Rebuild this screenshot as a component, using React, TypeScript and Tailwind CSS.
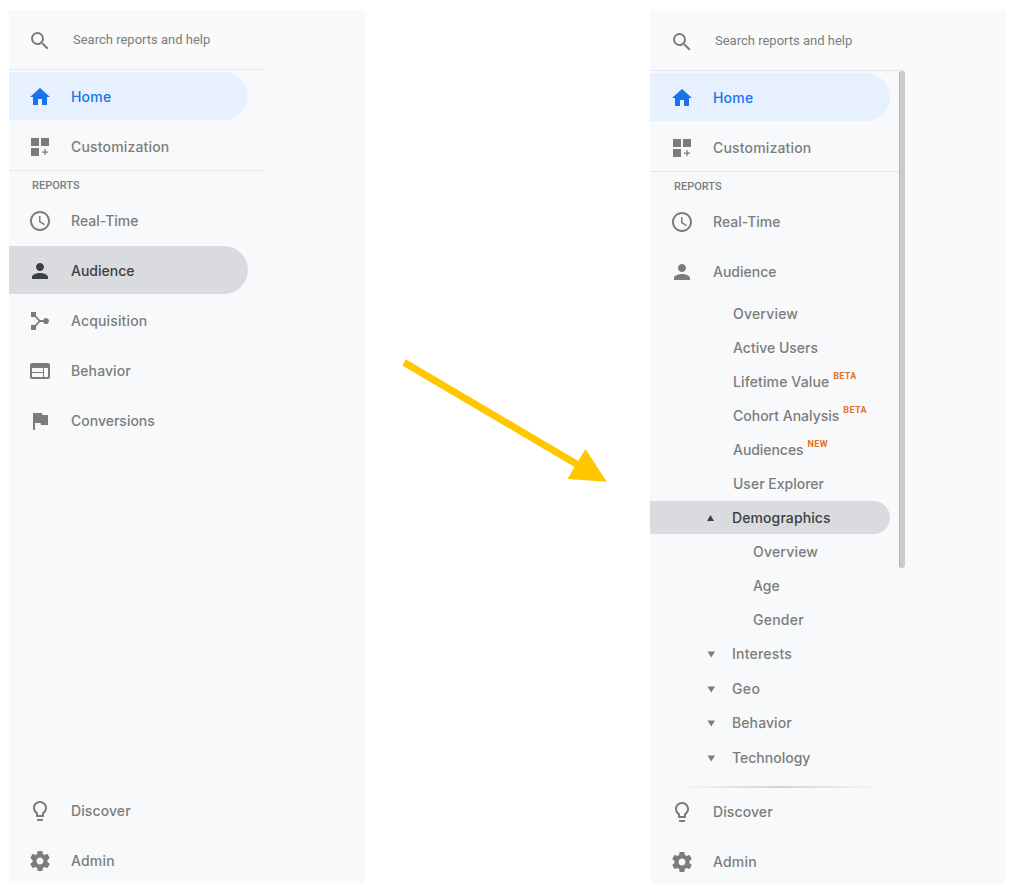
import type { ReactNode } from "react";

const paths = {
  search:
    "M15.5 14h-.79l-.28-.27A6.471 6.471 0 0 0 16 9.5 6.5 6.5 0 1 0 9.5 16c1.61 0 3.09-.59 4.23-1.57l.27.28v.79l5 4.99L20.49 19l-4.99-5zm-6 0C7.01 14 5 11.99 5 9.5S7.01 5 9.5 5 14 7.01 14 9.5 11.99 14 9.5 14z",
  home: "M10 20v-6h4v6h5v-8h3L12 3 2 12h3v8z",
  customization: "M3 3h8v8H3zM13 3h8v8h-8zM3 13h8v8H3zM16.4 14h1.3v2.4H20v1.3h-2.3V20h-1.3v-2.3H14v-1.3h2.4z",
  clock:
    "M11.99 2C6.47 2 2 6.48 2 12s4.47 10 9.99 10C17.52 22 22 17.52 22 12S17.52 2 11.99 2zM12 20c-4.42 0-8-3.58-8-8s3.58-8 8-8 8 3.58 8 8-3.58 8-8 8zm.5-13H11v6l5.25 3.15.75-1.23-4.5-2.67z",
  person:
    "M12 12c2.21 0 4-1.79 4-4s-1.79-4-4-4-4 1.79-4 4 1.79 4 4 4zm0 2c-2.67 0-8 1.34-8 4v2h16v-2c0-2.66-5.33-4-8-4z",
  acquisition:
    "M3 3h5v3.7l4 4.4h3.2a3 3 0 1 1 0 1.9H12l-4 4.4V21H3v-5h4l3.6-4L7 8H3z",
  web: "M20 4H4c-1.1 0-1.99.9-1.99 2L2 18c0 1.1.9 2 2 2h16c1.1 0 2-.9 2-2V6c0-1.1-.9-2-2-2zm-5 14H4v-4h11v4zm0-5H4V9h11v4zm5 5h-4V9h4v9z",
  flag: "M14.4 6L14 4H5v17h2v-7h5.6l.4 2h7V6z",
  bulb: "M9 21c0 .55.45 1 1 1h4c.55 0 1-.45 1-1v-1H9v1zm3-19C8.14 2 5 5.14 5 9c0 2.38 1.19 4.47 3 5.74V17c0 .55.45 1 1 1h6c.55 0 1-.45 1-1v-2.26c1.81-1.27 3-3.36 3-5.74 0-3.86-3.14-7-7-7zm2.85 11.1l-.85.6V16h-4v-2.3l-.85-.6A4.997 4.997 0 0 1 7 9c0-2.76 2.24-5 5-5s5 2.24 5 5c0 1.63-.8 3.16-2.15 4.1z",
  gear: "M19.43 12.98c.04-.32.07-.64.07-.98s-.03-.66-.07-.98l2.11-1.65c.19-.15.24-.42.12-.64l-2-3.46c-.12-.22-.39-.3-.61-.22l-2.49 1c-.52-.4-1.08-.73-1.69-.98l-.38-2.65C14.46 2.18 14.25 2 14 2h-4c-.25 0-.46.18-.49.42l-.38 2.65c-.61.25-1.17.59-1.69.98l-2.49-1c-.23-.09-.49 0-.61.22l-2 3.46c-.13.22-.07.49.12.64l2.11 1.65c-.04.32-.07.65-.07.98s.03.66.07.98l-2.11 1.65c-.19.15-.24.42-.12.64l2 3.46c.12.22.39.3.61.22l2.49-1c.52.4 1.08.73 1.69.98l.38 2.65c.03.24.24.42.49.42h4c.25 0 .46-.18.49-.42l.38-2.65c.61-.25 1.17-.59 1.69-.98l2.49 1c.23.09.49 0 .61-.22l2-3.46c.12-.22.07-.49-.12-.64l-2.11-1.65zM12 15.5c-1.93 0-3.5-1.57-3.5-3.5s1.57-3.5 3.5-3.5 3.5 1.57 3.5 3.5-1.57 3.5-3.5 3.5z",
};

function Icon({ name }: { name: keyof typeof paths }) {
  return (
    <svg className="size-6 shrink-0" viewBox="0 0 24 24" fill="currentColor">
      <path d={paths[name]} />
    </svg>
  );
}

type RowProps = { icon: keyof typeof paths; label: string; tracking: string; tone?: string };

function Row({ icon, label, tracking, tone = "text-[#7b7d7c]" }: RowProps) {
  return (
    <div className={`flex h-12 w-[240px] shrink-0 items-center gap-[19px] rounded-r-full pt-0.5 pl-5 ${tone}`}>
      <Icon name={icon} />
      <span className={`pb-0.5 text-[14px] font-medium whitespace-nowrap ${tracking}`}>{label}</span>
    </div>
  );
}

function Panel({ right = false, children }: { right?: boolean; children: ReactNode }) {
  return (
    <aside className={`h-[873px] w-[356px] shrink-0 overflow-hidden bg-[#f8f9fb] ${right ? "mt-[11px]" : "mt-[10px]"}`}>
      <div className={`flex h-full flex-col ${right ? "w-[255px]" : "-ml-px w-[256px]"}`}>
        <div className="mt-2.5 ml-[15px] flex h-10 w-[225px] shrink-0 items-center bg-[#fafafa] pt-0.5 pl-[5px] text-[#7b7d7c]">
          <Icon name="search" />
          <span className="ml-[21px] pb-0.5 font-[Roboto,sans-serif] text-[13px] whitespace-nowrap">
            Search reports and help
          </span>
        </div>
        {children}
      </div>
    </aside>
  );
}

function TopRows() {
  return (
    <>
      <Row icon="home" label="Home" tracking="tracking-[0.2px]" tone="bg-[#e6f0fe] text-[#1a73e8]" />
      <div className="h-0.5 shrink-0" />
      <Row icon="customization" label="Customization" tracking="tracking-[0.17px]" />
      <div className="h-px shrink-0 bg-[#e5e7e8]" />
      <div className="flex h-[25px] shrink-0 items-center pt-[6px] pl-6 font-[Roboto,sans-serif] text-[11px] font-medium text-[#7b7d7c]">
        REPORTS
      </div>
    </>
  );
}

function Sub({ label, tracking, badge, nested = false }: { label: string; tracking: string; badge?: string; nested?: boolean }) {
  return (
    <div className={`flex h-[34px] items-center pb-0.5 text-[14px] font-medium whitespace-nowrap text-[#7b7d7c] ${nested ? "pl-[103px]" : "pl-[83px]"}`}>
      <span className={tracking}>{label}</span>
      {badge && (
        <span className="mb-[9px] ml-[4px] font-[Roboto,sans-serif] text-[9px] font-bold tracking-[0.35px] text-[#e0702c]">{badge}</span>
      )}
    </div>
  );
}

function Group({ label, tracking, open = false }: { label: string; tracking: string; open?: boolean }) {
  return (
    <div
      className={`flex w-[240px] items-center gap-[17px] pl-[57px] text-[14px] font-medium ${
        open ? "mb-px h-[33px] rounded-r-full bg-[#dadbdf] text-[#3c4043]" : "h-[34.6px] text-[#7b7d7c]"
      }`}
    >
      <svg className="size-2 overflow-visible" viewBox="0 0 8 8" fill="currentColor">
        <path d={open ? "M0 7h7L3.5 1z" : "M.5 1.5h7.5L4.25 7.5z"} />
      </svg>
      <span className={`${open ? "" : "pb-px"} ${tracking}`}>{label}</span>
    </div>
  );
}

function Footer() {
  return (
    <div className="flex shrink-0 flex-col gap-0.5">
      <Row icon="bulb" label="Discover" tracking="tracking-[0.1px]" />
      <Row icon="gear" label="Admin" tracking="tracking-[0.2px]" />
    </div>
  );
}

export default function App() {
  return (
    <main className="relative flex h-[892px] w-[1014px] items-start justify-between overflow-hidden bg-white pr-2 pl-[9px] font-[Inter,sans-serif]">
      <Panel>
        <div className="mt-[9px] mb-0.5 h-px shrink-0 bg-[#e5e7e8]" />
        <TopRows />
        <div className="flex flex-col gap-0.5">
          <Row icon="clock" label="Real-Time" tracking="tracking-[0px]" />
          <Row icon="person" label="Audience" tracking="tracking-[0px]" tone="bg-[#dadbdf] text-[#3c4043]" />
          <Row icon="acquisition" label="Acquisition" tracking="tracking-[0.15px]" />
          <Row icon="web" label="Behavior" tracking="tracking-[0.1px]" />
          <Row icon="flag" label="Conversions" tracking="tracking-[0px]" />
        </div>
        <div className="mt-[342px]">
          <Footer />
        </div>
      </Panel>

      <svg className="absolute top-[350px] left-[395px] h-[140px] w-[220px]" viewBox="395 350 220 140" fill="#ffc700">
        <path d="M405.8 359.2L578.3 461 585.5 449 606.8 481.8 567.6 479 574.5 467 402.3 365.6z" />
      </svg>

      <Panel right>
        <div className="mt-[9px] h-px shrink-0 bg-[#e5e7e8]" />
        <div className="flex h-[715px] shrink-0 items-start">
          <div className="flex w-[249px] shrink-0 flex-col pt-0.5">
            <TopRows />
            <div className="flex flex-col gap-0.5">
              <Row icon="clock" label="Real-Time" tracking="tracking-[0px]" />
              <Row icon="person" label="Audience" tracking="tracking-[0px]" />
            </div>
            <nav className="mt-[2px]">
              <Sub label="Overview" tracking="tracking-[0.2px]" />
              <Sub label="Active Users" tracking="tracking-[0px]" />
              <Sub label="Lifetime Value" tracking="tracking-[0.12px]" badge="BETA" />
              <Sub label="Cohort Analysis" tracking="tracking-[0px]" badge="BETA" />
              <Sub label="Audiences" tracking="tracking-[-0.05px]" badge="NEW" />
              <Sub label="User Explorer" tracking="tracking-[0px]" />
              <Group label="Demographics" tracking="tracking-[0.1px]" open />
              <Sub nested label="Overview" tracking="tracking-[0.2px]" />
              <Sub nested label="Age" tracking="tracking-[0px]" />
              <Sub nested label="Gender" tracking="tracking-[0.25px]" />
              <Group label="Interests" tracking="tracking-[0.2px]" />
              <Group label="Geo" tracking="tracking-[0.4px]" />
              <Group label="Behavior" tracking="tracking-[0.1px]" />
              <Group label="Technology" tracking="tracking-[0px]" />
            </nav>
          </div>
          <div className="h-[497px] w-1.5 rounded-full border-l border-[#b5b5b5] bg-[#cbcbcb]" />
        </div>
        <div className="ml-[25px] h-0.5 w-[210px] shrink-0 bg-linear-to-r from-transparent via-[#d3d5d4] to-transparent" />
        <div className="-mt-[1px]">
          <Footer />
        </div>
      </Panel>
    </main>
  );
}
